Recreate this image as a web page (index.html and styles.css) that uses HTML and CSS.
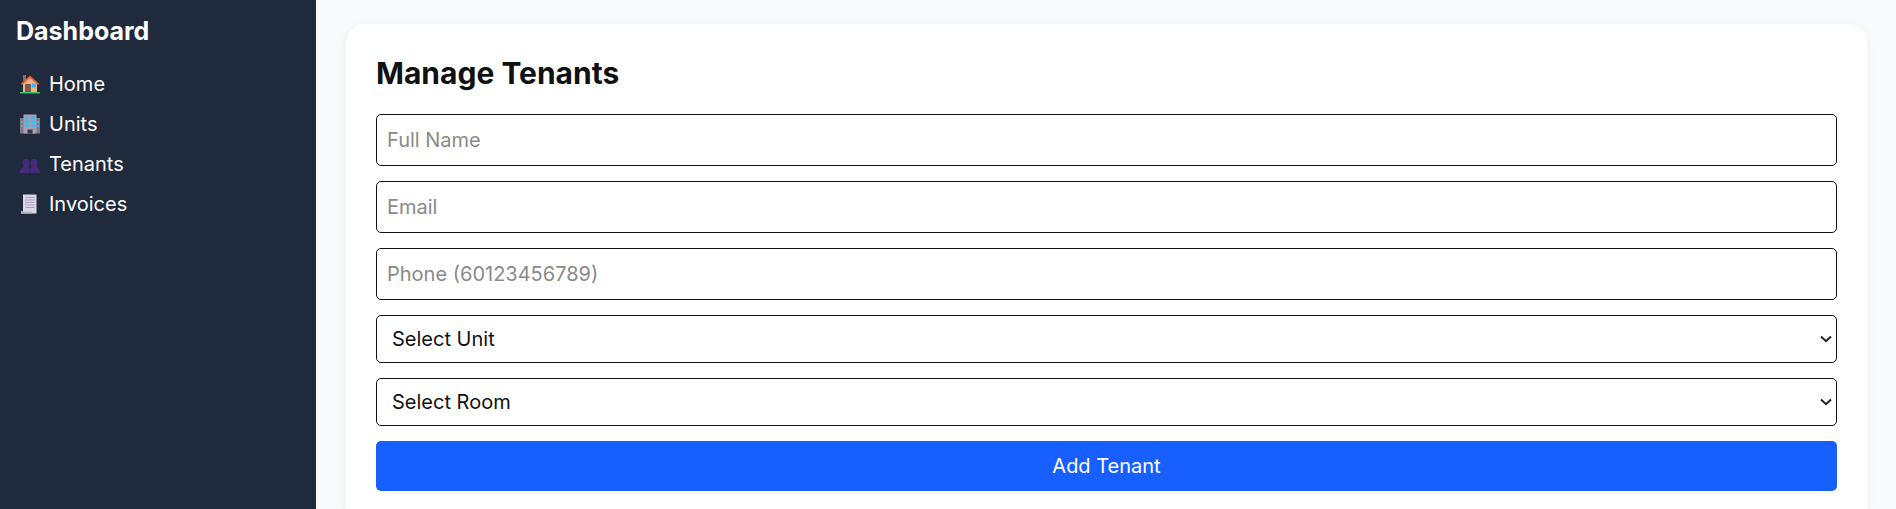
FILE: index.html
```html
<!DOCTYPE html>
<html lang="en">
<head>
    <meta charset="UTF-8">
    <title>Manage Tenants</title>
    <link rel="stylesheet" href="styles.css">
</head>
<body>
    <aside class="sidebar">
        <h2 class="brand">Dashboard</h2>
        <nav class="nav">
            <a class="nav-link" href="#">
                <svg class="nav-icon" viewBox="0 0 20 20">
                    <rect x="3" y="1" width="3" height="6" fill="#8d6a55"/>
                    <path d="M3 9 10 3l7 6v9H3z" fill="#e8b48a"/>
                    <path d="M0.5 10 10 1.5 19.5 10 18 10.8 10 4 2 10.8z" fill="#ee5a2c"/>
                    <rect x="5" y="10" width="6" height="8" fill="#7d5a4c"/>
                    <rect x="12" y="9.5" width="4" height="4" fill="#3db4f2"/>
                    <rect x="0" y="18" width="20" height="1.5" fill="#3fc06f"/>
                </svg>
                Home
            </a>
            <a class="nav-link" href="#">
                <svg class="nav-icon" viewBox="0 0 20 20">
                    <rect x="0" y="4" width="20" height="15.5" fill="#7f7b88"/>
                    <rect x="3.5" y="0.5" width="13" height="19" fill="#a5a0b0"/>
                    <path d="M5 2.5h4v2.5H5zM11 2.5h4v2.5h-4zM5 6.5h4V9H5zM11 6.5h4V9h-4zM5 10.5h4V13H5zM11 10.5h4V13h-4z" fill="#45b8f0"/>
                    <path d="M1 7h1.5v2H1zM17.5 7H19v2h-1.5zM1 11h1.5v2H1zM17.5 11H19v2h-1.5z" fill="#45b8f0"/>
                    <rect x="7.5" y="15.5" width="5" height="4" fill="#3d3848"/>
                </svg>
                Units
            </a>
            <a class="nav-link" href="#">
                <svg class="nav-icon" viewBox="0 0 20 20">
                    <path d="M2.5 8.5c0-5 7-5 7 0 0 2-1 3.500-1.500 4L9.800 14v5H0v-2.500c0-2 2-3 3.800-3.500-.8-1-1.300-2.500-1.300-4.500z" fill="#432a7a"/>
                    <path d="M10.500 8.500c0-5 7-5 7 0 0 2-.5 3.500-1.300 4.500 1.800.5 3.800 1.500 3.800 3.500V19h-9.800v-5l1.800-1.500c-.5-.5-1.500-2-1.500-4z" fill="#432a7a"/>
                </svg>
                Tenants
            </a>
            <a class="nav-link" href="#">
                <svg class="nav-icon" viewBox="0 0 20 20">
                    <path d="M3 0.500h13.500V19.500H1v-2h2z" fill="#dcd6e6"/>
                    <path d="M5 3.500h9.500M5 6h9.500M5 8.500h9.500M5 11h9.500M5 13.500h9.500" stroke="#a9a3b5" stroke-width="1"/>
                    <path d="M1 17.500h11v2H1z" fill="#bdb5cc"/>
                </svg>
                Invoices
            </a>
        </nav>
    </aside>

    <main class="main">
        <section class="card">
            <h1 class="title">Manage Tenants</h1>
            <form class="form">
                <input class="field" type="text" placeholder="Full Name">
                <input class="field" type="email" placeholder="Email">
                <input class="field" type="text" placeholder="Phone (60123456789)">
                <select class="field field-select">
                    <option>Select Unit</option>
                </select>
                <select class="field field-select">
                    <option>Select Room</option>
                </select>
                <button class="btn" type="button">Add Tenant</button>
            </form>
        </section>
    </main>
</body>
</html>
```

FILE: styles.css
```css
* {
    box-sizing: border-box;
}
body {
    margin: 0;
    display: flex;
    height: 509px;
    overflow: hidden;
    font-family: Inter, "Liberation Sans", sans-serif;
    background-color: #f8f9fb;
    color: #111;
}
.sidebar {
    width: 316px;
    flex-shrink: 0;
    padding: 16px;
    background-color: #1f2a3c;
    color: #fff;
}
.brand {
    margin: 0;
    font-size: 25px;
    line-height: 30px;
    font-weight: 700;
}
.nav {
    display: flex;
    flex-direction: column;
    gap: 10px;
    margin-top: 23px;
}
.nav-link {
    display: flex;
    align-items: center;
    gap: 9px;
    height: 30px;
    padding-left: 4px;
    color: #fff;
    font-size: 20px;
    text-decoration: none;
}
.nav-icon {
    width: 20px;
    height: 20px;
}
.main {
    flex: 1;
    padding: 24px 29px 0 30px;
}
.card {
    height: 100%;
    padding: 30px 30px 0;
    background-color: #fff;
    border-radius: 19px 19px 0 0;
    box-shadow: 0 2px 10px rgba(0, 0, 0, 0.05);
}
.title {
    margin: 0;
    padding-top: 1px;
    font-size: 30px;
    line-height: 36px;
    font-weight: 700;
}
.form {
    display: flex;
    flex-direction: column;
    gap: 15px;
    margin-top: 23px;
}
.field {
    width: 100%;
    height: 52px;
    padding: 0 10px;
    border: 1px solid #111;
    border-radius: 5px;
    background-color: #fff;
    color: #111;
    font-family: inherit;
    font-size: 20px;
}
.field::placeholder {
    color: #8a8a8a;
}
.field-select {
    height: 48px;
    padding: 0 15px;
    appearance: none;
    background-image: url("data:image/svg+xml,%3Csvg xmlns='http://www.w3.org/2000/svg' width='12' height='8'%3E%3Cpath d='M1 1.500 6 6.200 11 1.500' fill='none' stroke='%23222' stroke-width='2'/%3E%3C/svg%3E");
    background-repeat: no-repeat;
    background-position: right 4px center;
}
.btn {
    width: 100%;
    height: 50px;
    border: none;
    border-radius: 5px;
    background-color: #185fff;
    color: #fff;
    font-family: inherit;
    font-size: 20px;
}
```
